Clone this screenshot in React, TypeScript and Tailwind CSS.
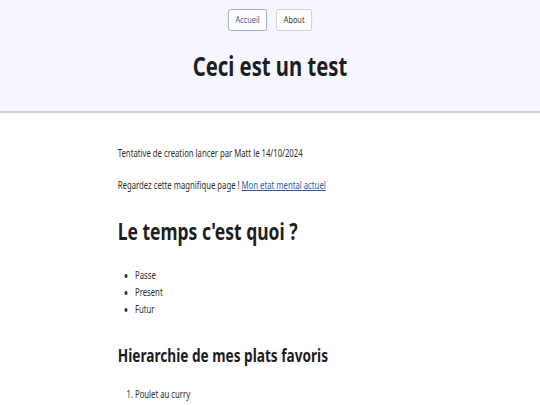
export default function App() {
  return (
    <div className="w-[540px] min-h-screen overflow-hidden bg-white">
      <div className="w-[720px] origin-top-left scale-x-75 text-[#2a2a2a] font-['Noto_Sans',sans-serif]">
        <header className="bg-[#f5f6ff] border-b-2 border-[#cdcdd6] h-[113px] flex flex-col items-center">
          <nav className="flex gap-[12px] mt-[9px]">
            <a className="h-[22px] px-[9px] flex items-center border border-[#86a3d3] rounded-[3px] text-[9.8px] text-[#3b5c98] bg-white">
              Accueil
            </a>
            <a className="h-[22px] px-[9px] flex items-center border border-[#c9cad3] rounded-[3px] text-[9.8px] text-[#333] bg-white">
              About
            </a>
          </nav>
          <h1 className="mt-[21px] text-[27px] font-bold leading-none text-[#1e1e1e]">Ceci est un test</h1>
        </header>
        <main className="pl-[157px] pt-[32px] text-[10.3px] leading-[17px] text-[#2e2e2e]">
          <p>Tentative de creation lancer par Matt le 14/10/2024</p>
          <p className="mt-[15px]">
            Regardez cette magnifique page !{" "}
            <a href="#" className="text-[#2a5db0] underline">Mon etat mental actuel</a>
          </p>
          <h2 className="mt-[26px] text-[23.3px] font-bold leading-none text-[#1e1e1e]">Le temps c'est quoi ?</h2>
          <ul className="mt-[24px] list-disc pl-[23px]">
            <li>Passe</li>
            <li>Present</li>
            <li>Futur</li>
          </ul>
          <h2 className="mt-[28px] text-[18.2px] font-bold leading-none text-[#1e1e1e]">Hierarchie de mes plats favoris</h2>
          <ol className="mt-[21px] list-decimal pl-[23px]">
            <li>Poulet au curry</li>
          </ol>
        </main>
      </div>
    </div>
  );
}
